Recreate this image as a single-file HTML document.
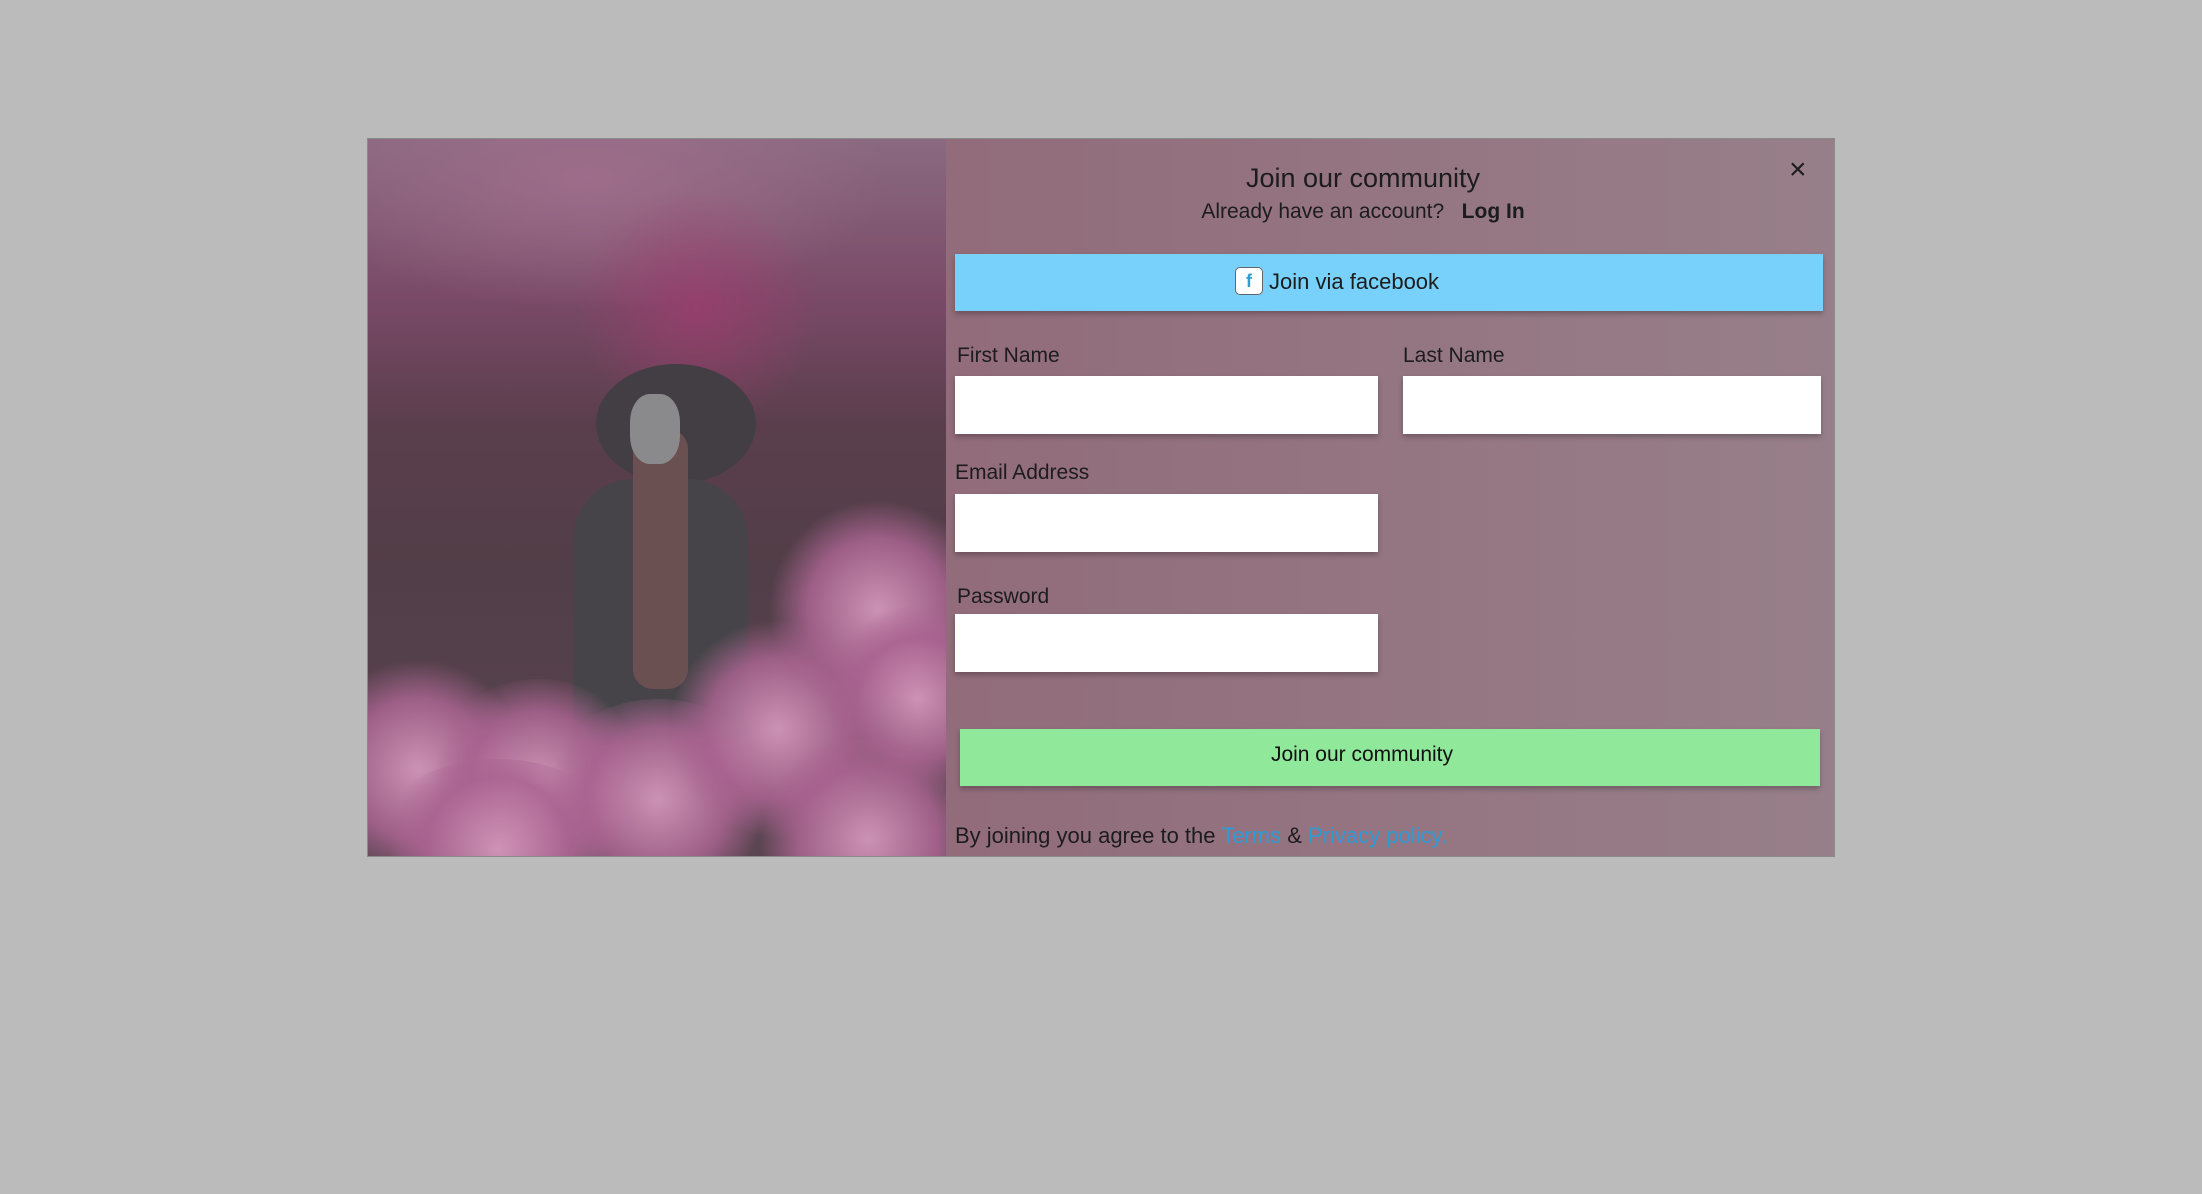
<!DOCTYPE html>
<html><head><meta charset="utf-8"><style>
*{margin:0;padding:0;box-sizing:border-box}
body{width:2202px;height:1194px;background:#bbbbbb;font-family:"Liberation Sans",sans-serif;position:relative;overflow:hidden}
.modal{position:absolute;left:367px;top:138px;width:1468px;height:719px;border:1px solid #8a8a8a;background:linear-gradient(90deg,#8e5f70,#977f89);}
.img{position:absolute;left:0;top:0;width:578px;height:717px;overflow:hidden;
background:
radial-gradient(ellipse 120px 120px at 330px 170px,rgba(160,60,110,.7),transparent),
radial-gradient(ellipse 300px 130px at 220px 40px,rgba(160,110,140,.9),transparent),
linear-gradient(180deg,#8a6a80 0%,#7a4a68 22%,#5a3e4c 40%,#523e48 60%,#5a4550 100%);}
.cloud{position:absolute;border-radius:50%;background:radial-gradient(circle,rgba(210,150,185,.95) 0%,rgba(170,100,145,.85) 45%,rgba(150,90,130,0) 70%)}
.abs{position:absolute}
.t{color:#1c1c1c}
.box{position:absolute;background:#fff;box-shadow:0 3px 5px rgba(0,0,0,.25)}
</style></head><body>
<div class="modal">
 <div class="img">
  <div class="abs" style="left:228px;top:225px;width:160px;height:120px;border-radius:50%;background:#433e43"></div>
  <div class="abs" style="left:205px;top:340px;width:175px;height:260px;border-radius:60px 60px 10px 10px;background:#464448"></div>
  <div class="abs" style="left:265px;top:290px;width:55px;height:260px;border-radius:20px;background:#6a5050"></div>
  <div class="abs" style="left:262px;top:255px;width:50px;height:70px;border-radius:40%;background:#8a8a8c"></div>
  <div class="cloud" style="left:-60px;top:520px;width:220px;height:220px"></div>
  <div class="cloud" style="left:60px;top:540px;width:220px;height:200px"></div>
  <div class="cloud" style="left:170px;top:560px;width:240px;height:200px"></div>
  <div class="cloud" style="left:300px;top:480px;width:220px;height:220px"></div>
  <div class="cloud" style="left:400px;top:360px;width:220px;height:220px"></div>
  <div class="cloud" style="left:460px;top:460px;width:180px;height:200px"></div>
  <div class="cloud" style="left:380px;top:600px;width:240px;height:200px"></div>
  <div class="cloud" style="left:0px;top:620px;width:260px;height:180px"></div>
 </div>
 <div class="abs t" style="left:578px;top:24px;width:834px;text-align:center;font-size:27px">Join our community</div>
 <div class="abs t" style="left:578px;top:61px;width:834px;text-align:center;font-size:21px">Already have an account?&nbsp;&nbsp; <b>Log In</b></div>
 <div class="abs t" style="left:1421px;top:14px;font-size:30px">×</div>
 <div class="abs" style="left:587px;top:115px;width:868px;height:57px;background:#77d1fb;box-shadow:0 3px 5px rgba(0,0,0,.25);text-align:center;font-size:22px;line-height:55px;color:#1c1c1c;padding-right:104px">
  <span style="display:inline-block;width:28px;height:28px;background:#fff;border:1px solid #666;border-radius:5px;color:#2a9fd8;font-size:18px;line-height:26px;vertical-align:middle;margin-top:-4px;font-weight:bold">f</span> Join via facebook</div>
 <div class="abs t" style="left:589px;top:205px;font-size:21px">First Name</div>
 <div class="abs t" style="left:1035px;top:205px;font-size:21px">Last Name</div>
 <div class="box" style="left:587px;top:237px;width:423px;height:58px"></div>
 <div class="box" style="left:1035px;top:237px;width:418px;height:58px"></div>
 <div class="abs t" style="left:587px;top:322px;font-size:21px">Email Address</div>
 <div class="box" style="left:587px;top:355px;width:423px;height:58px"></div>
 <div class="abs t" style="left:589px;top:446px;font-size:21px">Password</div>
 <div class="box" style="left:587px;top:475px;width:423px;height:58px"></div>
 <div class="abs" style="left:592px;top:590px;width:860px;height:57px;background:#90e89a;box-shadow:0 3px 5px rgba(0,0,0,.25);text-align:center;font-size:21px;line-height:52px;color:#111;padding-right:56px">Join our community</div>
 <div class="abs t" style="left:587px;top:684px;font-size:22px">By joining you agree to the <span style="color:#2f9ad6">Terms</span> &amp; <span style="color:#2f9ad6">Privacy policy.</span></div>
</div>
</body></html>
